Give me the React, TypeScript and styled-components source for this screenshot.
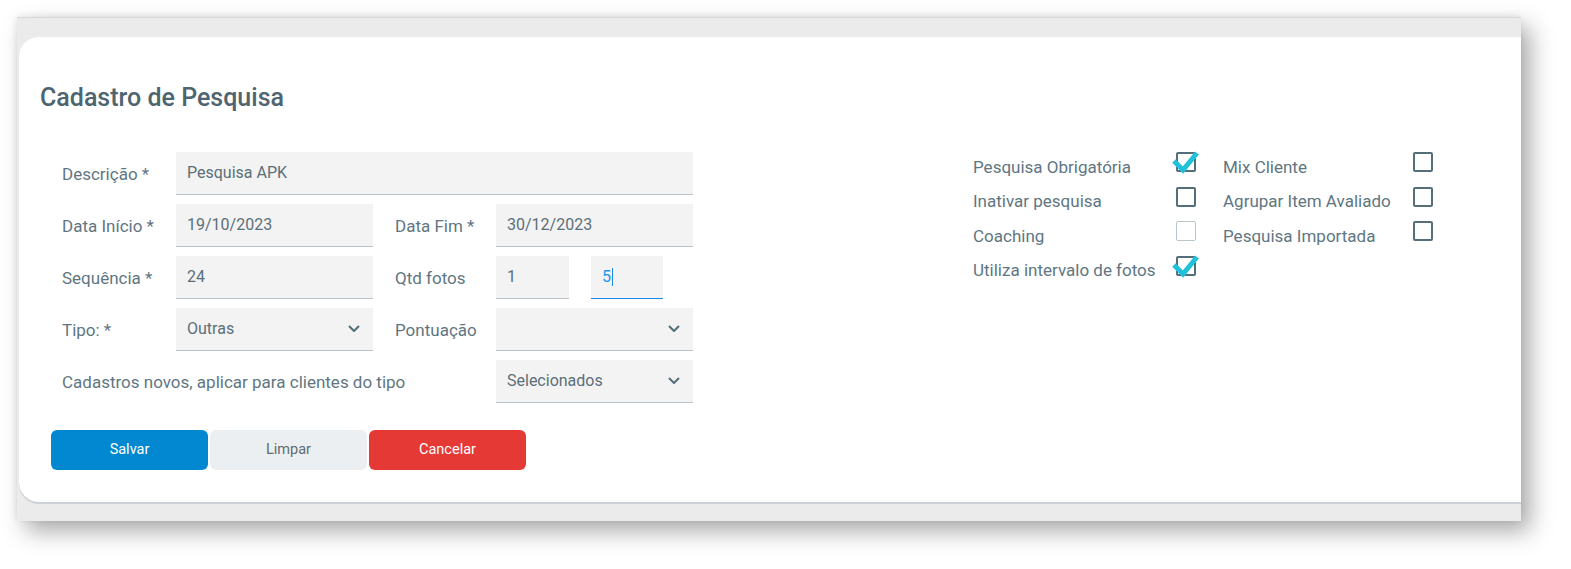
import React from "react";
import styled, { createGlobalStyle } from "styled-components";

const GlobalStyle = createGlobalStyle`
  html, body {
    margin: 0;
    background: #ffffff;
    font-family: Roboto, "Liberation Sans", Arial, sans-serif;
  }
  * { box-sizing: border-box; }
`;

const Page = styled.div`
  padding: 17px 0 0 17px;
  width: 1571px;
  height: 569px;
  overflow: hidden;
`;

const Frame = styled.div`
  width: 1504px;
  height: 504px;
  background: #ebebeb;
  border-top: 1px solid #d8d8d8;
  padding: 19px 0 0 2px;
  box-shadow: 9px 10px 22px rgba(0, 0, 0, 0.34), -1px -1px 6px rgba(0, 0, 0, 0.08);
`;

const Card = styled.div`
  height: 465px;
  background: #ffffff;
  border-radius: 20px 0 0 20px;
  box-shadow: 0 2px 0 #cdd0d6;
  padding: 46px 0 0 21px;
`;

const Title = styled.h1`
  margin: 0;
  font-size: 25px;
  line-height: 30px;
  font-weight: 500;
  color: #4e6570;
`;

const Body = styled.div`
  display: flex;
  align-items: flex-start;
  gap: 278px;
  margin-top: 32px;
`;

const FormGrid = styled.div`
  display: grid;
  grid-template-columns: 114px 197px 123px 197px;
  grid-auto-rows: 43px;
  row-gap: 9px;
  margin: 6.5px 0 0 22px;
`;

const Label = styled.div<{ $span?: number; $indent?: boolean }>`
  display: flex;
  align-items: center;
  font-size: 17px;
  color: #5f7682;
  white-space: nowrap;
  padding: 1px 0 0 ${(p) => (p.$indent ? "22px" : "0")};
  grid-column: ${(p) => (p.$span ? `span ${p.$span}` : "auto")};
`;

const Field = styled.div<{ $span?: number; $focused?: boolean; $width?: number }>`
  display: flex;
  align-items: center;
  justify-content: space-between;
  height: 43px;
  width: ${(p) => (p.$width ? `${p.$width}px` : "auto")};
  padding: 0 13px 0 11px;
  background: #f3f3f3;
  border-bottom: 1px solid ${(p) => (p.$focused ? "#1e88e5" : "#b8c3c9")};
  font-size: 16px;
  color: ${(p) => (p.$focused ? "#2196f3" : "#5b6f79")};
  grid-column: ${(p) => (p.$span ? `span ${p.$span}` : "auto")};
`;

const Pair = styled.div`
  display: flex;
  gap: 22px;
`;

const Caret = styled.span`
  display: inline-block;
  width: 1px;
  height: 18px;
  margin-left: 1px;
  vertical-align: middle;
  background: #1e88e5;
`;

const Chevron = () => (
  <svg width="12" height="7" viewBox="0 0 12 7">
    <path d="M1 1l5 5 5-5" fill="none" stroke="#546e7a" strokeWidth="2" />
  </svg>
);

const Select = ({ value }: { value?: string }) => (
  <Field>
    <span>{value}</span>
    <Chevron />
  </Field>
);

const CheckGrid = styled.div`
  display: grid;
  grid-template-columns: 203px 20px 217px 20px;
  grid-auto-rows: 34.5px;
  margin-left: 2px;
`;

const CheckLabel = styled.div<{ $indent?: boolean }>`
  display: flex;
  align-items: center;
  font-size: 17px;
  color: #5f7682;
  white-space: nowrap;
  padding: 9px 0 0 ${(p) => (p.$indent ? "27px" : "0")};
`;

const BoxCell = styled.div`
  display: flex;
  align-items: center;
`;

const Box = styled.span<{ $disabled?: boolean }>`
  position: relative;
  display: block;
  width: 20px;
  height: 20px;
  border: ${(p) => (p.$disabled ? "1.5px solid #b9c6cc" : "2px solid #546e7a")};
  border-radius: 2px;
`;

const Tick = styled.svg`
  position: absolute;
  left: -6px;
  top: -8px;
`;

const Checkbox = ({ checked, disabled }: { checked?: boolean; disabled?: boolean }) => (
  <BoxCell>
    <Box $disabled={disabled}>
      {checked && (
        <Tick width="32" height="30" viewBox="0 0 32 30">
          <path d="M2 15l9 9 14-17" fill="none" stroke="#22c1da" strokeWidth="5" />
        </Tick>
      )}
    </Box>
  </BoxCell>
);

const ButtonRow = styled.div`
  display: flex;
  gap: 2px;
  margin: 27px 0 0 11px;
`;

const Button = styled.button<{ $kind: "primary" | "neutral" | "danger" }>`
  width: 157px;
  height: 40px;
  border: none;
  border-radius: 6px;
  font-family: inherit;
  font-size: 14.5px;
  background: ${(p) =>
    p.$kind === "primary" ? "#0288d1" : p.$kind === "danger" ? "#e53935" : "#eceff1"};
  color: ${(p) => (p.$kind === "neutral" ? "#5f6b73" : "#ffffff")};
`;

export default function App() {
  return (
    <>
      <GlobalStyle />
      <Page>
        <Frame>
          <Card>
            <Title>Cadastro de Pesquisa</Title>
            <Body>
              <div>
                <FormGrid>
                  <Label>Descrição *</Label>
                  <Field $span={3}>Pesquisa APK</Field>

                  <Label>Data Início *</Label>
                  <Field>19/10/2023</Field>
                  <Label $indent>Data Fim *</Label>
                  <Field>30/12/2023</Field>

                  <Label>Sequência *</Label>
                  <Field>24</Field>
                  <Label $indent>Qtd fotos</Label>
                  <Pair>
                    <Field $width={73}>1</Field>
                    <Field $width={72} $focused>
                      <span>
                        5<Caret />
                      </span>
                    </Field>
                  </Pair>

                  <Label>Tipo: *</Label>
                  <Select value="Outras" />
                  <Label $indent>Pontuação</Label>
                  <Select />

                  <Label $span={3}>Cadastros novos, aplicar para clientes do tipo</Label>
                  <Select value="Selecionados" />
                </FormGrid>
                <ButtonRow>
                  <Button $kind="primary">Salvar</Button>
                  <Button $kind="neutral">Limpar</Button>
                  <Button $kind="danger">Cancelar</Button>
                </ButtonRow>
              </div>
              <CheckGrid>
                <CheckLabel>Pesquisa Obrigatória</CheckLabel>
                <Checkbox checked />
                <CheckLabel $indent>Mix Cliente</CheckLabel>
                <Checkbox />

                <CheckLabel>Inativar pesquisa</CheckLabel>
                <Checkbox />
                <CheckLabel $indent>Agrupar Item Avaliado</CheckLabel>
                <Checkbox />

                <CheckLabel>Coaching</CheckLabel>
                <Checkbox disabled />
                <CheckLabel $indent>Pesquisa Importada</CheckLabel>
                <Checkbox />

                <CheckLabel>Utiliza intervalo de fotos</CheckLabel>
                <Checkbox checked />
              </CheckGrid>
            </Body>
          </Card>
        </Frame>
      </Page>
    </>
  );
}
